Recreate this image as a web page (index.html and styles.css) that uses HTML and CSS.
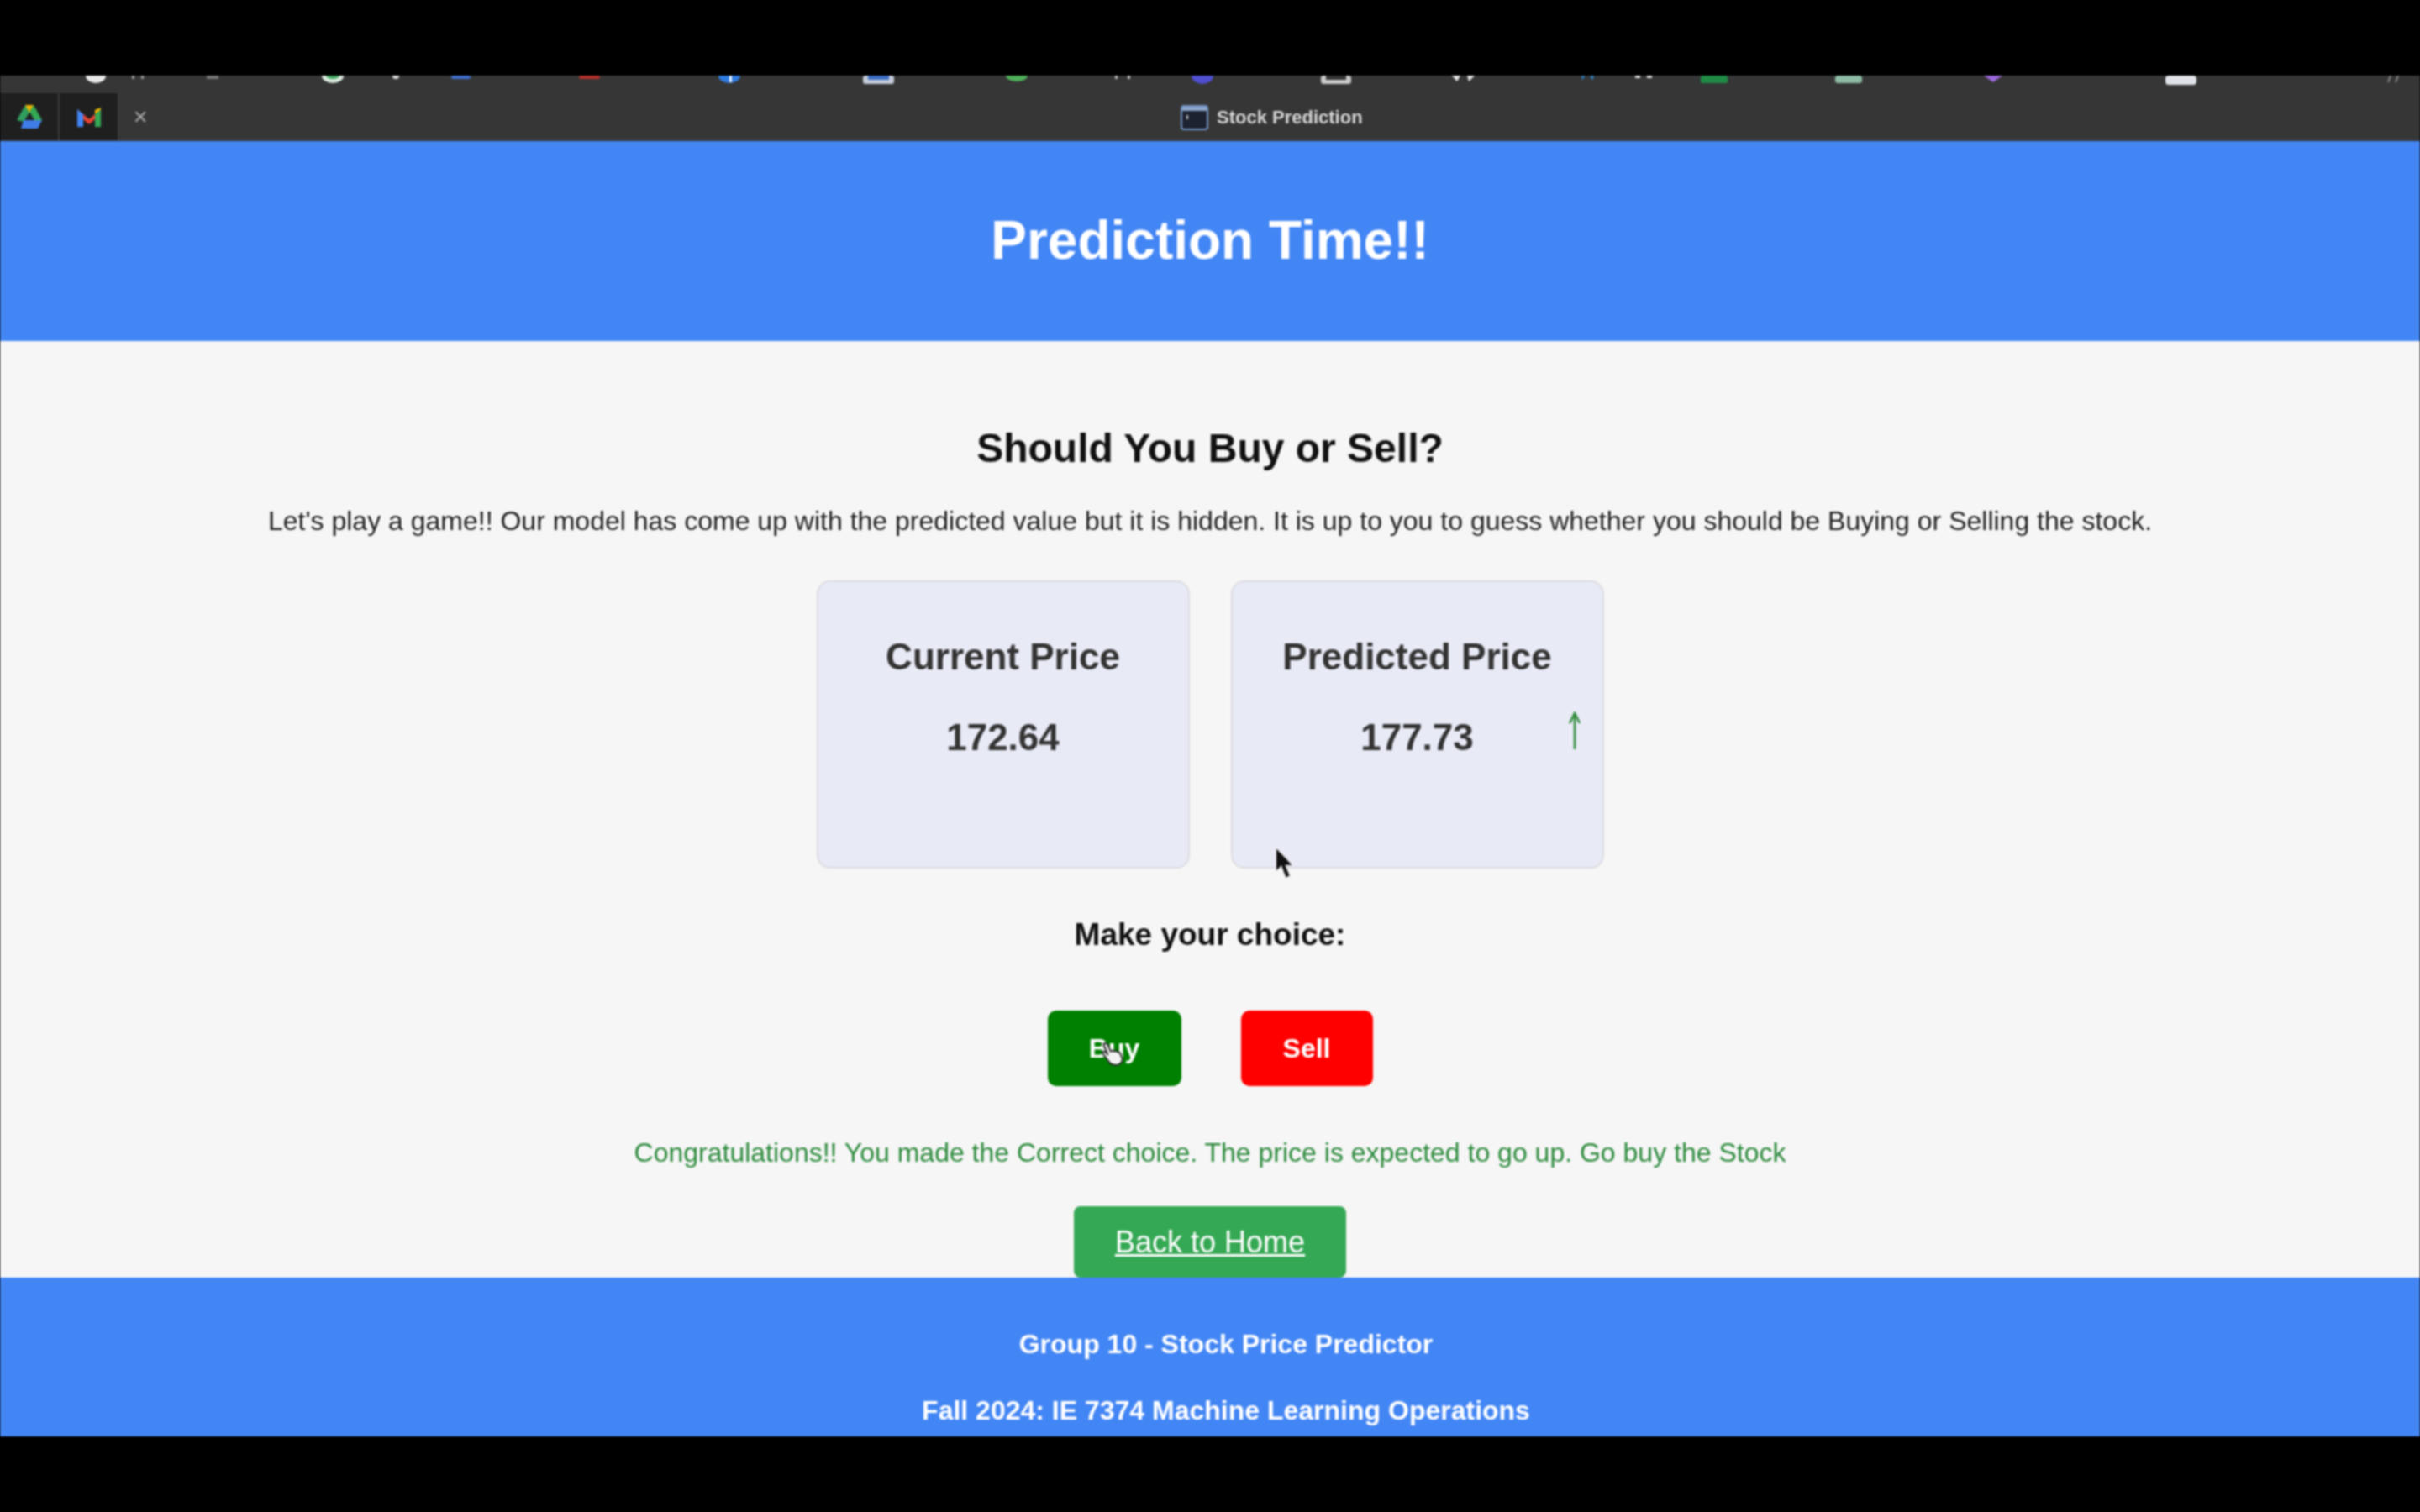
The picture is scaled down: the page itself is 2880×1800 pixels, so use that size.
FILE: index.html
```html
<!DOCTYPE html>
<html lang="en">
<head>
    <meta charset="UTF-8">
    <title>Stock Prediction</title>
    <link rel="stylesheet" href="styles.css">
</head>
<body>
    <div class="screen">
        <div class="browser-bar">
            <!-- bookmark icons, cut off by the top of the recording -->
            <svg class="bookmarks" width="2880" height="21" viewBox="0 0 2880 21">
                <ellipse cx="114" cy="0" rx="12" ry="9" fill="#e8e8e8"/>
                <rect x="157" y="0" width="3" height="4" fill="#999"/>
                <rect x="168" y="0" width="3" height="4" fill="#999"/>
                <rect x="246" y="0" width="14" height="4" fill="#777"/>
                <ellipse cx="396" cy="0" rx="13" ry="9" fill="#d8e8dc"/>
                <ellipse cx="396" cy="0" rx="8" ry="4" fill="#3fa45a"/>
                <ellipse cx="471" cy="1" rx="4" ry="3" fill="#ddd"/>
                <rect x="537" y="0" width="23" height="4" rx="2" fill="#3f6fd0"/>
                <rect x="689" y="0" width="25" height="4" rx="2" fill="#b7302e"/>
                <ellipse cx="868" cy="0" rx="13" ry="9" fill="#2f7be0"/>
                <rect x="868" y="0" width="3" height="8" fill="#e8eefc"/>
                <rect x="1027" y="0" width="37" height="10" rx="3" fill="#c5cbd8"/>
                <rect x="1033" y="0" width="25" height="5" fill="#3c6fc4"/>
                <ellipse cx="1210" cy="0" rx="13" ry="7" fill="#4fae5a"/>
                <rect x="1327" y="0" width="3" height="4" fill="#bbb"/>
                <rect x="1342" y="0" width="3" height="4" fill="#bbb"/>
                <ellipse cx="1431" cy="0" rx="13" ry="10" fill="#4f4fd0"/>
                <rect x="1572" y="0" width="36" height="10" rx="3" fill="#c9c9c9"/>
                <rect x="1578" y="0" width="24" height="5" fill="#333"/>
                <path d="M1728 0l6 7 4-7zM1746 0l2 7 7-7z" fill="#e4e4e4"/>
                <path d="M1882 0l1 6 3-6zM1892 0l3 6 2-6z" fill="#2f7fb8"/>
                <rect x="1946" y="0" width="6" height="3" fill="#ddd"/>
                <rect x="1960" y="0" width="6" height="3" fill="#ddd"/>
                <rect x="2024" y="0" width="32" height="9" rx="2" fill="#1f8a46"/>
                <rect x="2184" y="0" width="32" height="9" rx="3" fill="#8dbba6"/>
                <path d="M2361 0h22l-11 8z" fill="#9a68d8"/>
                <rect x="2577" y="0" width="37" height="11" rx="4" fill="#dfe3e8"/>
                <path d="M2842 8l3-8M2851 8l3-8" stroke="#888" stroke-width="2"/>
            </svg>
            <div class="tab-row">
                <div class="pinned-tab">
                    <svg width="32" height="30" viewBox="0 0 32 30">
                        <path d="M11 1h10l-5 9-5 1z" fill="#f4b400"/>
                        <path d="M21 1l10 18h-9L16 9z" fill="#34a853"/>
                        <path d="M11 1l5 9-7 11-8-2z" fill="#2f9e5c"/>
                        <path d="M9 19h22l-5 10H6z" fill="#3f7ee8"/>
                    </svg>
                </div>
                <div class="pinned-tab">
                    <svg width="32" height="28" viewBox="0 0 32 28">
                        <path d="M2 5l14 12L30 5v6L16 23 2 11z" fill="#ea4335"/>
                        <path d="M2 5v21h7V11z" fill="#4285f4"/>
                        <path d="M30 5v21h-7V11z" fill="#34a853"/>
                        <path d="M23 11l7-6v-2l-7 3z" fill="#fbbc05"/>
                    </svg>
                </div>
                <span class="tab-close">✕</span>
                <div class="window-title">
                    <svg width="33" height="30" viewBox="0 0 33 30">
                        <rect x="1" y="1" width="31" height="28" rx="3" fill="#1c2230" stroke="#6f8fc0" stroke-width="2"/>
                        <rect x="2" y="2" width="29" height="5" fill="#8ea6cc"/>
                        <rect x="7" y="12" width="2" height="5" fill="#ccc"/>
                    </svg>
                    <span>Stock Prediction</span>
                </div>
            </div>
        </div>

        <header class="page-header">
            <h1>Prediction Time!!</h1>
        </header>

        <main class="content">
            <h2>Should You Buy or Sell?</h2>
            <p class="intro">Let's play a game!! Our model has come up with the predicted value but it is hidden. It is up to you to guess whether you should be Buying or Selling the stock.</p>

            <div class="cards">
                <div class="card">
                    <h3>Current Price</h3>
                    <div class="price">172.64</div>
                </div>
                <div class="card">
                    <h3>Predicted Price</h3>
                    <div class="price">177.73</div>
                    <svg class="trend-arrow" width="20" height="46" viewBox="0 0 20 46">
                        <path d="M10 3v42M4 14l6-12 6 12" fill="none" stroke="#2e8b3a" stroke-width="2.5"/>
                    </svg>
                </div>
                <svg class="cursor-arrow" width="22" height="38" viewBox="0 0 20 36">
                    <path d="M1 1v27l6-6 5 13 5-2-5-12h8z" fill="#111" stroke="#eee" stroke-width="1"/>
                </svg>
            </div>

            <p class="choice-label">Make your choice:</p>

            <div class="choice-buttons">
                <button class="btn-buy">Buy</button>
                <button class="btn-sell">Sell</button>
                <svg class="cursor-hand" width="28" height="28" viewBox="0 0 26 26">
                    <path d="M3 2c2-2 4-1 5 1l3 7 2-1 2 1 2-1 2 2 2 0 3 7c0 4-3 7-7 7-4 0-7-1-9-5L2 12c0-2 2-3 4-1l2 3z" fill="#f2f2f2" stroke="#2b2b2b" stroke-width="1.8"/>
                </svg>
            </div>

            <p class="result">Congratulations!! You made the Correct choice. The price is expected to go up. Go buy the Stock</p>

            <a class="home-link" href="#">Back to Home</a>
        </main>

        <footer class="page-footer">
            <p>Group 10 - Stock Price Predictor</p>
            <p>Fall 2024: IE 7374 Machine Learning Operations</p>
        </footer>
    </div>
</body>
</html>
```

FILE: styles.css
```css
* {
    box-sizing: border-box;
}

body {
    margin: 0;
    background-color: #000;
    font-family: "Liberation Sans", Arial, sans-serif;
}

.screen {
    height: 1800px;
    padding: 90px 0;
    display: flex;
    flex-direction: column;
    overflow: hidden;
    filter: blur(0.8px);
}

.browser-bar {
    height: 78px;
    flex-shrink: 0;
    background-color: #363636;
    display: flex;
    flex-direction: column;
}

.bookmarks {
    display: block;
    height: 21px;
}

.tab-row {
    height: 56px;
    display: flex;
    align-items: center;
    position: relative;
}

.pinned-tab {
    width: 71px;
    height: 56px;
    background-color: #1f1f1f;
    border-right: 2px solid #3a3a3a;
    display: flex;
    align-items: center;
    justify-content: center;
}

.tab-close {
    margin: 2px 0 0 16px;
    color: #a5a5a5;
    font-size: 22px;
}

.window-title {
    position: absolute;
    left: 1405px;
    top: 14px;
    display: flex;
    align-items: center;
    gap: 10px;
    color: #d6d6d6;
    font-size: 22px;
    font-weight: bold;
}

.window-title svg {
    display: block;
}

.page-header {
    height: 238px;
    flex-shrink: 0;
    background-color: #4285f4;
    color: #fff;
    display: flex;
    align-items: center;
    justify-content: center;
}

.page-header h1 {
    margin: 0 0 3px;
    font-size: 64px;
}

.content {
    height: 1115px;
    flex-shrink: 0;
    background-color: #f6f6f6;
    padding-top: 100px;
    display: flex;
    flex-direction: column;
    align-items: center;
    color: #111;
}

.content h2 {
    margin: 0;
    font-size: 48px;
    line-height: 56px;
}

.intro {
    margin: 40px 0 0;
    font-size: 32px;
    line-height: 36px;
    color: #222;
}

.cards {
    margin-top: 53px;
    display: flex;
    gap: 49px;
    position: relative;
}

.card {
    width: 444px;
    height: 343px;
    background-color: #e8eaf6;
    border: 2px solid #dcdce2;
    border-radius: 16px;
    padding-top: 63px;
    text-align: center;
    color: #333;
    position: relative;
}

.card h3 {
    margin: 0;
    font-size: 44px;
    line-height: 52px;
}

.price {
    margin-top: 45px;
    font-size: 44px;
    line-height: 50px;
    font-weight: bold;
}

.trend-arrow {
    position: absolute;
    right: 23px;
    top: 154px;
}

.cursor-arrow {
    position: absolute;
    left: 545px;
    top: 317px;
}

.choice-label {
    margin: 58px 0 0;
    font-size: 37px;
    line-height: 42px;
    font-weight: bold;
}

.choice-buttons {
    margin-top: 69px;
    display: flex;
    gap: 71px;
    position: relative;
}

.choice-buttons button {
    height: 90px;
    border: none;
    border-radius: 10px;
    color: #fff;
    font-family: inherit;
    font-size: 32px;
    font-weight: bold;
    padding: 0;
}

.btn-buy {
    width: 159px;
    background-color: #008000;
}

.btn-sell {
    width: 157px;
    background-color: #ff0000;
}

.cursor-hand {
    position: absolute;
    left: 63px;
    top: 38px;
}

.result {
    margin: 61px 0 0;
    font-size: 32px;
    line-height: 36px;
    color: #2e8b3e;
}

.home-link {
    margin-top: 46px;
    width: 324px;
    height: 85px;
    background-color: #34a853;
    border-radius: 8px;
    color: #fff;
    font-size: 36px;
    display: flex;
    align-items: center;
    justify-content: center;
}

.page-footer {
    height: 189px;
    flex-shrink: 0;
    background-color: #4285f4;
    color: #fff;
    padding: 61px 0 0 38px;
    text-align: center;
    font-size: 32px;
    font-weight: bold;
}

.page-footer p {
    margin: 0 0 42px;
    line-height: 37px;
}
```
